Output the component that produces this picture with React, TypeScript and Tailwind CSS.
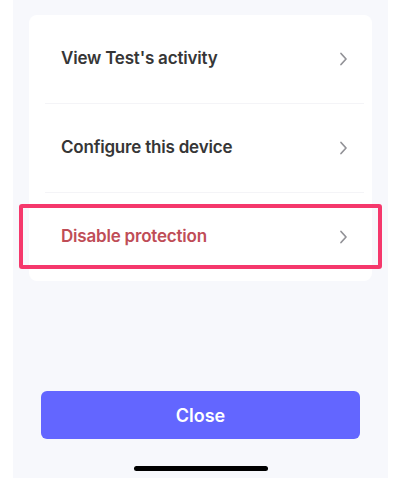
import React from "react";

function Chevron() {
  return (
    <svg width="9" height="14" viewBox="0 0 9 14" fill="none" className="shrink-0">
      <path d="M2 1.5L7 7L2 12.5" stroke="#929297" strokeWidth="1.7" strokeLinecap="round" strokeLinejoin="round" />
    </svg>
  );
}

function Row({ label, danger }: { label: string; danger?: boolean }) {
  return (
    <div className="flex h-[88px] items-center justify-between pl-8 pr-[24px]">
      <span
        className={
          "text-[17px] font-semibold tracking-[-0.2px] " + (danger ? "text-[#bf4d57]" : "text-[#363636]")
        }
      >
        {label}
      </span>
      <Chevron />
    </div>
  );
}

export default function App() {
  return (
    <div
      className="h-[484px] w-[400px] bg-white"
      style={{ fontFamily: "Inter, 'Open Sans', sans-serif" }}
    >
      <div className="relative ml-[13px] flex h-[478px] w-[375px] flex-col bg-[#f7f8fc] px-4 pt-[15px]">
        <div className="overflow-hidden rounded-lg bg-white">
          <Row label="View Test's activity" />
          <div className="ml-4 mr-2 h-px bg-[#f4f4f7]" />
          <Row label="Configure this device" />
          <div className="ml-4 mr-2 h-px bg-[#f4f4f7]" />
          <Row label="Disable protection" danger />
        </div>
        <div className="flex-1" />
        <button className="mx-3 flex h-12 items-center justify-center rounded-md bg-[#6366ff] text-[18px] font-semibold text-white">
          Close
        </button>
        <div className="mt-[27px] mb-[7px] flex justify-center">
          <div className="h-[5px] w-[134px] rounded-full bg-black" />
        </div>
        <div className="pointer-events-none absolute left-[6px] top-[204px] h-[65px] w-[363px] rounded-[3px] border-4 border-[#f5386c]" />
      </div>
    </div>
  );
}
